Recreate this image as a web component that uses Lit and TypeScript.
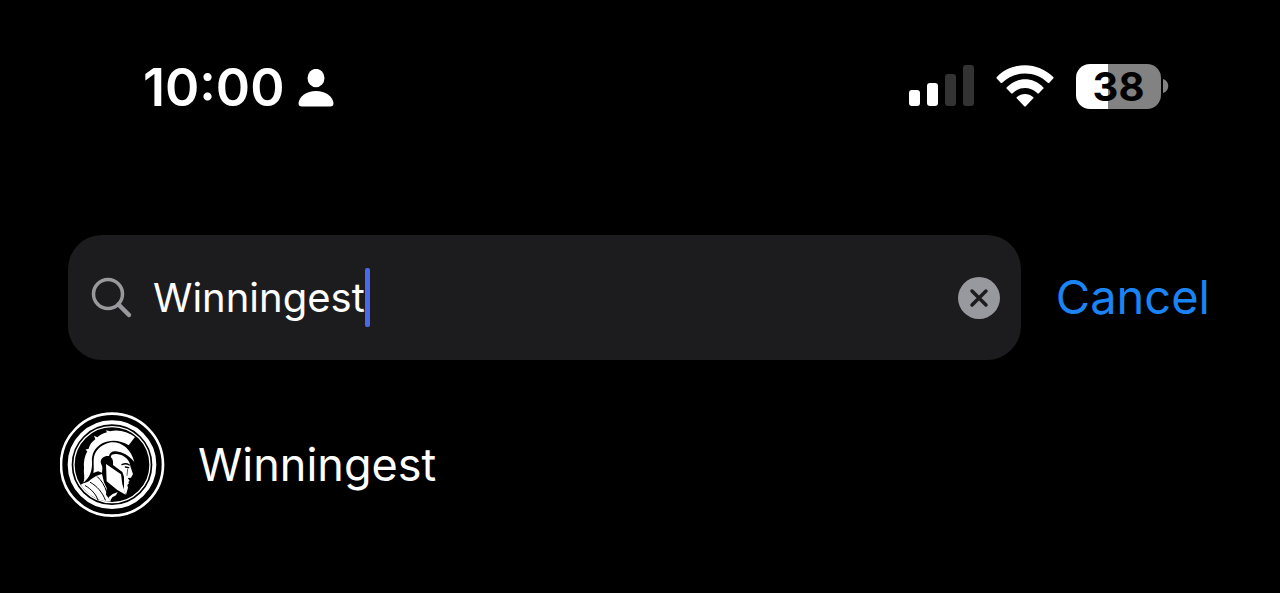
import { LitElement, html, css } from "lit";
import { customElement, state } from "lit/decorators.js";

@customElement("status-bar")
class StatusBar extends LitElement {
  static styles = css`
    :host {
      display: flex;
      justify-content: space-between;
      align-items: flex-start;
      padding: 0 111px 0 143px;
    }
    svg { display: block; flex: none; }
    .left, .right { display: flex; align-items: center; }
    .left { gap: 14px; }
    .right { gap: 22px; height: 62px; }
    .time { font-size: 52px; line-height: 66px; font-weight: 600; }
    .battery { display: flex; align-items: center; gap: 2px; }
    .level {
      width: 85px;
      height: 45px;
      border-radius: 14px;
      color: #000;
      font-size: 40px;
      line-height: 45px;
      font-weight: 700;
      text-align: center;
    }
  `;

  render() {
    const charge = 38;
    return html`
      <div class="left">
        <span class="time">10:00</span>
        <svg width="36" height="38" viewBox="0 0 36 38" fill="#fff" aria-hidden="true">
          <ellipse cx="18" cy="9" rx="8.5" ry="9.2" />
          <path d="M4 37.500Q.4 37.500.5 34C1.500 27 8.500 22 18 22s16.500 5 17.500 12q.1 3.500-3.500 3.500z" />
        </svg>
      </div>
      <div class="right">
        <svg width="65" height="42" viewBox="0 0 65 42" aria-label="Signal">
          <g fill="#fff">
            <rect y="25" width="11" height="16" rx="3" />
            <rect x="18" y="18" width="11" height="23" rx="3" />
          </g>
          <g fill="#333">
            <rect x="36" y="9" width="11" height="32" rx="3" />
            <rect x="54" y="0" width="11" height="41" rx="3" />
          </g>
        </svg>
        <svg width="58" height="42" viewBox="302 44 172 125" fill="#fff" aria-label="Wi-Fi">
          <path d="M304 80C350 33 426 33 472 80q2 2 0 4l-11 12q-3 3-6 0C419 60 357 60 321 96q-3 3-6 0l-11-12q-2-2 0-4z" />
          <path d="M334 110c31-31 77-31 108 0q3 3 0 5l-12 12q-3 3-6 0c-21-19-51-19-72 0q-3 3-6 0l-12-12q-3-2 0-5z" />
          <path d="M364 139c14-12 34-12 48 0q3 3 0 5l-21 22q-3 3-6 0l-21-22q-3-2 0-5z" />
        </svg>
        <div class="battery">
          <div
            class="level"
            style="background:linear-gradient(90deg,#fff ${charge}%,#828282 ${charge}%)"
          >${charge}</div>
          <svg width="6" height="14" viewBox="0 0 6 14" fill="#828282" aria-hidden="true">
            <path d="M0 0C7 2 7 12 0 14z" />
          </svg>
        </div>
      </div>
    `;
  }
}

@customElement("spartan-crest")
class SpartanCrest extends LitElement {
  static styles = css`
    :host { display: block; flex: none; }
    svg { display: block; width: 105px; height: 105px; }
  `;

  render() {
    return html`
      <svg viewBox="34 28 315 315" aria-hidden="true">
        <g fill="none" stroke="#fff">
          <circle cx="190" cy="186" r="153" stroke-width="8" />
          <circle cx="190" cy="186" r="127" stroke-width="12" />
          <circle cx="190" cy="186" r="114" stroke-width="4" />
        </g>
        <g fill="#fff">
          <path d="M104 240C110 225 104 212 106 196C104 180 108 160 116 146L110 141L120 138C123 126 130 117 140 110L136 99L146 104C155 96 165 92 175 89L172 83L184 86C210 80 237 87 259 103L240 128C215 111 183 110 161 122C138 135 128 155 130 178C131 202 125 224 104 240Z" />
          <path d="M134 211C137 196 134 184 135 171C136 145 155 127 181 120C212 113 246 134 257 178C240 158 222 148 202 146C192 144 183 150 181 160C168 158 156 166 156 178C157 186 162 190 161 198L160 210L148 206Z" />
          <path d="M189 156C212 149 236 163 243 181L246 194L253 214L247 225L237 226L243 234L239 238L241 242L236 247L238 255L232 276L226 263L226 222L221 208L193 187C194 178 193 168 186 163Z" />
          <path d="M172 184L217 215L221 245L231 276L206 262L174 236Z" />
          <path d="M96 246C107 238 118 241 125 231L142 220L160 214L166 239L174 256L172 276L187 296C151 298 116 277 96 246Z" />
          <path d="M180 284L192 274L207 268L202 278L191 284L184 295Z" />
        </g>
        <g fill="none" stroke="#000" stroke-linecap="round">
          <path d="M125 239C145 250 162 270 170 292M146 222C159 234 168 248 174 268M110 249C129 260 142 275 148 292" stroke-width="3" />
          <path d="M220 186C228 182 236 183 242 187M230 193L240 195" stroke-width="4" />
          <path d="M237 199L235 218" stroke-width="2" />
        </g>
      </svg>
    `;
  }
}

@customElement("app-root")
class AppRoot extends LitElement {
  @state() private query = "Winningest";

  static styles = css`
    :host {
      display: block;
      box-sizing: border-box;
      min-height: 100vh;
      padding-top: 55px;
      background: #000;
      color: #fff;
      font-family: Inter, "Liberation Sans", sans-serif;
    }
    svg { display: block; flex: none; }
    button {
      border: 0;
      padding: 0;
      background: none;
      font: inherit;
      cursor: pointer;
    }
    .search {
      display: flex;
      align-items: center;
      gap: 35px;
      margin-top: 114px;
      padding: 0 70px 0 68px;
    }
    .field {
      display: flex;
      align-items: center;
      flex: 1;
      min-width: 0;
      box-sizing: border-box;
      height: 125px;
      padding: 0 21px 0 23px;
      border-radius: 34px;
      background: #1c1c1e;
    }
    .entry {
      display: flex;
      align-items: center;
      flex: 1;
      min-width: 0;
      margin-left: 20px;
    }
    input {
      field-sizing: content;
      min-width: 0;
      padding: 0;
      border: 0;
      outline: 0;
      background: none;
      color: #fff;
      caret-color: transparent;
      font: inherit;
      font-size: 40px;
      line-height: 58px;
    }
    .caret {
      flex: none;
      width: 5px;
      height: 59px;
      border-radius: 2px;
      background: #4a69e8;
    }
    .cancel { padding-bottom: 2px; color: #1a84f5; font-size: 47px; line-height: 60px; }
    .results { margin: 0; padding: 52px 60px 0; list-style: none; }
    .result {
      display: flex;
      align-items: center;
      gap: 33px;
      color: inherit;
      text-decoration: none;
      font-size: 45px;
      line-height: 60px;
    }
  `;

  private edit(e: Event) {
    this.query = (e.target as HTMLInputElement).value;
  }

  private clear() {
    this.query = "";
  }

  render() {
    return html`
      <status-bar></status-bar>
      <div class="search" role="search">
        <div class="field">
          <svg width="42" height="42" viewBox="0 0 42 42" fill="none" stroke="#98989d" aria-hidden="true">
            <circle cx="17" cy="17" r="14.500" stroke-width="3.500" />
            <path d="M27.500 27.500 38 38" stroke-width="4.500" stroke-linecap="round" />
          </svg>
          <div class="entry">
            <input type="text" aria-label="Search" .value=${this.query} @input=${this.edit} />
            <span class="caret"></span>
          </div>
          <button aria-label="Clear search" @click=${this.clear}>
            <svg width="42" height="42" viewBox="0 0 42 42" aria-hidden="true">
              <circle cx="21" cy="21" r="21" fill="#98989f" />
              <path d="M14 14 28 28M28 14 14 28" stroke="#1c1c1e" stroke-width="3.500" stroke-linecap="round" />
            </svg>
          </button>
        </div>
        <button class="cancel" @click=${this.clear}>Cancel</button>
      </div>
      <ul class="results">
        <li>
          <a class="result" href="#winningest">
            <spartan-crest></spartan-crest>
            <span>Winningest</span>
          </a>
        </li>
      </ul>
    `;
  }
}
